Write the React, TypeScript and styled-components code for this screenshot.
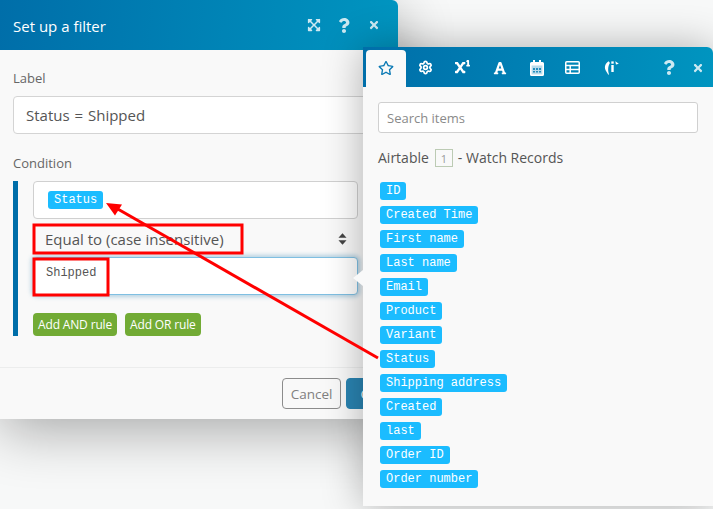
import React from "react";
import styled, { createGlobalStyle } from "styled-components";
import { Settings } from "lucide-react";
import { FaExpandArrowsAlt, FaQuestion, FaTimes, FaRegStar, FaFont, FaSuperscript } from "react-icons/fa";

const Global = createGlobalStyle`
  html, body { margin: 0; padding: 0; }
  body { font-family: "Open Sans", "Noto Sans", sans-serif; color: #555; background: #f6f7f7; }
`;

const Desktop = styled.div`
  position: relative;
  width: 713px;
  height: 509px;
  overflow: hidden;
  background: #f7f8f8;
`;

const Dialog = styled.section`
  position: absolute;
  left: 0;
  top: 0;
  width: 398px;
  height: 419px;
  display: flex;
  flex-direction: column;
  background: #f9f9f9;
  border-top-right-radius: 6px;
  box-shadow: 0 12px 55px rgba(0, 0, 0, 0.32);
`;

const DialogHeader = styled.header`
  height: 50px;
  flex: none;
  display: flex;
  align-items: center;
  padding: 0 13px;
  background: linear-gradient(95deg, #006ea9, #0095c0);
  border-top-right-radius: 6px;
`;

const DialogTitle = styled.h1`
  flex: 1;
  margin: 0;
  font-size: 15px;
  font-weight: 400;
  color: #fff;
  position: relative;
  top: 1px;
`;

const IconSlot = styled.span<{ $w: number }>`
  display: flex;
  justify-content: center;
  align-items: center;
  width: ${(p) => p.$w}px;
  color: rgba(255, 255, 255, 0.8);
`;

const DialogIcons = styled.div`
  display: flex;
  align-items: center;
  margin-right: 4px;
  gap: 16px;
`;

const DialogBody = styled.div`
  flex: 1;
  padding: 19px 13px 0;
`;

const FieldLabel = styled.div`
  font-size: 13px;
  line-height: 18px;
  color: #666;
`;

const TextBox = styled.div`
  box-sizing: border-box;
  height: 38px;
  width: 372px;
  margin: 9px 0 20px;
  padding: 0 12px;
  display: flex;
  align-items: center;
  background: #fff;
  border: 1px solid #d4d4d4;
  border-radius: 4px;
  font-size: 15px;
  word-spacing: 1px;
  color: #555;
`;

const ConditionRow = styled.div`
  display: flex;
  margin-top: 9px;
  height: 155px;
`;

const Bar = styled.div`
  width: 5px;
  background: #006ea9;
  margin-right: 15px;
`;

const ConditionFields = styled.div`
  width: 325px;
  display: flex;
  flex-direction: column;
`;

const TagField = styled.div`
  box-sizing: border-box;
  height: 38px;
  padding: 9px 14px;
  display: flex;
  align-items: flex-start;
  background: #fff;
  border: 1px solid #d0d0d0;
  border-radius: 4px;
`;

const Pill = styled.span`
  display: inline-block;
  height: 18px;
  line-height: 18px;
  padding: 0 6px;
  background: #1bbcff;
  border-radius: 3px;
  color: #fff;
  font-family: "Liberation Mono", "Courier New", monospace;
  font-size: 12px;
  white-space: pre;
`;

const SelectRow = styled.div`
  height: 30px;
  margin-top: 5px;
  padding: 0 12px;
  display: flex;
  align-items: center;
  justify-content: space-between;
  font-size: 15px;
  color: #555;
`;

const Carets = styled.svg`
  width: 9px;
  height: 12px;
  margin-right: -1px;
`;

const FocusField = styled.div`
  box-sizing: border-box;
  height: 38px;
  margin-top: 3px;
  padding: 5px 12px;
  background: #fff;
  border: 1px solid #7fbfe2;
  border-radius: 4px;
  box-shadow: 0 0 4px 2px rgba(80, 150, 190, 0.4);
  font-family: "Liberation Mono", "Courier New", monospace;
  font-size: 12px;
  line-height: 20px;
  color: #555;
`;

const RuleButtons = styled.div`
  display: flex;
  gap: 8px;
  margin-top: 18px;
`;

const RuleButton = styled.button`
  height: 23px;
  padding: 0 5px;
  border: 0;
  border-radius: 4px;
  background: #72ab35;
  color: #fff;
  font-family: inherit;
  font-size: 12px;
  letter-spacing: -0.15px;
`;

const DialogFooter = styled.footer`
  flex: none;
  box-sizing: border-box;
  height: 52px;
  border-top: 1px solid #eceded;
  padding: 10px 0 0 282px;
  display: flex;
  gap: 5px;
`;

const FooterButton = styled.button<{ $primary?: boolean }>`
  box-sizing: border-box;
  height: 31px;
  width: ${(p) => (p.$primary ? "48px" : "59px")};
  border-radius: 4px;
  border: 1px solid ${(p) => (p.$primary ? "#2a84b2" : "#8c8c8c")};
  background: ${(p) => (p.$primary ? "#2a84b2" : "transparent")};
  color: ${(p) => (p.$primary ? "#fff" : "#808080")};
  font-family: inherit;
  font-size: 13.5px;
  padding: 0;
`;

const Panel = styled.aside`
  position: absolute;
  left: 363px;
  top: 47px;
  width: 350px;
  height: 459px;
  display: flex;
  flex-direction: column;
  background: #f9f9f9;
  box-shadow: 0 0 40px rgba(0, 0, 0, 0.3);
  border-top-right-radius: 6px;
  &::before {
    content: "";
    position: absolute;
    left: -10px;
    top: 223px;
    border-style: solid;
    border-width: 8px 10px 8px 0;
    border-color: transparent #f9f9f9 transparent transparent;
  }
`;

const Tabs = styled.nav`
  height: 40px;
  flex: none;
  box-sizing: border-box;
  padding: 3px 1px 0 3px;
  display: flex;
  background: linear-gradient(95deg, #006ea9, #0095c0);
  border-top-right-radius: 6px;
`;

const Tab = styled.span<{ $active?: boolean; $w: number }>`
  width: ${(p) => p.$w}px;
  flex: none;
  display: flex;
  align-items: center;
  justify-content: center;
  padding-bottom: 2px;
  box-sizing: border-box;
  background: ${(p) => (p.$active ? "#f9f9f9" : "transparent")};
  border-radius: 4px 4px 0 0;
  color: ${(p) => (p.$active ? "#0a79b4" : "#fff")};
`;

const TabSpacer = styled.span`
  flex: 1;
`;

const PanelBody = styled.div`
  padding: 15px;
  display: flex;
  flex-direction: column;
`;

const Search = styled.div`
  box-sizing: border-box;
  height: 31px;
  width: 320px;
  padding: 0 8px;
  display: flex;
  align-items: center;
  background: #fff;
  border: 1px solid #d0d0d0;
  border-radius: 3px;
  font-size: 13px;
  color: #8a8a8a;
`;

const ModuleTitle = styled.div`
  margin-top: 14px;
  height: 20px;
  display: flex;
  align-items: center;
  font-size: 14px;
  color: #555;
  white-space: pre;
`;

const Badge = styled.span`
  box-sizing: border-box;
  width: 18px;
  height: 18px;
  margin: 2px 5px 0 6px;
  display: inline-flex;
  align-items: center;
  justify-content: center;
  border: 1px solid #bccbb4;
  font-size: 11px;
  color: #999;
`;

const ItemList = styled.ul`
  list-style: none;
  margin: 15px 0 0;
  padding: 0 0 0 2px;
  display: flex;
  flex-direction: column;
  align-items: flex-start;
  gap: 6px;
`;

const Item = styled.li`
  display: flex;
`;

const Annotations = styled.svg`
  position: absolute;
  left: 0;
  top: 0;
  width: 713px;
  height: 509px;
  pointer-events: none;
`;

const items = ["ID", "Created Time", "First name", "Last name", "Email", "Product", "Variant", "Status", "Shipping address", "Created", "last", "Order ID", "Order number"];

const CalendarIcon = () => (
  <svg width="14" height="16" viewBox="0 0 14 16">
    <path fill="#fff" d="M3 0h2v2h4V0h2v2h1.500A1.500 1.500 0 0 1 14 3.500v11a1.500 1.500 0 0 1-1.500 1.500h-11A1.500 1.500 0 0 1 0 14.500v-11A1.500 1.500 0 0 1 1.500 2H3Z" />
    <rect x="1.600" y="5.500" width="10.800" height="8.900" fill="#b9dcec" />
    <path fill="#0a7fb4" d="M3 8h2v2H3zM6 8h2v2H6zM9 8h2v2H9zM3 11h2v1.500H3zM6 11h2v1.500H6zM9 11h2v1.500H9z" opacity="0.85" />
  </svg>
);

const TableIcon = () => (
  <svg width="15" height="13" viewBox="0 0 15 13" fill="none" stroke="#fff" strokeWidth="1.500">
    <rect x="0.750" y="0.750" width="13.500" height="11.500" rx="1" />
    <path d="M0.750 4.500h13.500M0.750 8.400h13.500M5.200 4.500v7.700" />
  </svg>
);

const FunctionsIcon = () => (
  <svg width="18" height="18" viewBox="0 0 18 18" fill="#fff">
    <path d="M5.800 2.300 C2.400 4 .9 8 2.700 11.500 L5.300 15.800 L6.100 15.300 C5 12.400 4.500 8 6.900 4 Z" />
    <rect x="8.300" y="6" width="2.400" height="7" />
    <rect x="8.300" y="2.400" width="2.400" height="2.300" />
    <path d="M12.300 2.200 L15.800 4.700 L13 5.500 Z" />
  </svg>
);

export default function App() {
  return (
    <Desktop>
      <Global />
      <Dialog>
        <DialogHeader>
          <DialogTitle>Set up a filter</DialogTitle>
          <DialogIcons>
            <IconSlot $w={14}><FaExpandArrowsAlt size={14} /></IconSlot>
            <IconSlot $w={14}><FaQuestion size={15} /></IconSlot>
            <IconSlot $w={14}><FaTimes size={12} /></IconSlot>
          </DialogIcons>
        </DialogHeader>
        <DialogBody>
          <FieldLabel>Label</FieldLabel>
          <TextBox>Status = Shipped</TextBox>
          <FieldLabel>Condition</FieldLabel>
          <ConditionRow>
            <Bar />
            <ConditionFields>
              <TagField><Pill>Status</Pill></TagField>
              <SelectRow>
                <span>Equal to (case insensitive)</span>
                <Carets viewBox="0 0 10 13" fill="#444">
                  <path d="M5 0 L9.500 5 H0.500 Z M5 13 L0.500 8 H9.500 Z" />
                </Carets>
              </SelectRow>
              <FocusField>Shipped</FocusField>
              <RuleButtons>
                <RuleButton>Add AND rule</RuleButton>
                <RuleButton>Add OR rule</RuleButton>
              </RuleButtons>
            </ConditionFields>
          </ConditionRow>
        </DialogBody>
        <DialogFooter>
          <FooterButton>Cancel</FooterButton>
          <FooterButton $primary>OK</FooterButton>
        </DialogFooter>
      </Dialog>
      <Panel>
        <Tabs>
          <Tab $active $w={40}><FaRegStar size={16} /></Tab>
          <Tab $w={38}><Settings size={15} strokeWidth={2.8} /></Tab>
          <Tab $w={37}><FaSuperscript size={15} /></Tab>
          <Tab $w={38}><FaFont size={14} /></Tab>
          <Tab $w={35}><CalendarIcon /></Tab>
          <Tab $w={37}><TableIcon /></Tab>
          <Tab $w={41}><FunctionsIcon /></Tab>
          <TabSpacer />
          <Tab $w={29}><IconSlot $w={14}><FaQuestion size={15} /></IconSlot></Tab>
          <Tab $w={29}><IconSlot $w={14}><FaTimes size={12} /></IconSlot></Tab>
        </Tabs>
        <PanelBody>
          <Search>Search items</Search>
          <ModuleTitle>Airtable<Badge>1</Badge>- Watch Records</ModuleTitle>
          <ItemList>
            {items.map((t) => (
              <Item key={t}><Pill>{t}</Pill></Item>
            ))}
          </ItemList>
        </PanelBody>
      </Panel>
      <Annotations viewBox="0 0 713 509">
        <rect x="34" y="225" width="208" height="28" fill="none" stroke="#f00" strokeWidth="3" />
        <rect x="34" y="259" width="74" height="36" fill="none" stroke="#f00" strokeWidth="3" />
        <line x1="378" y1="358" x2="116" y2="208" stroke="#f00" strokeWidth="3" />
        <path d="M106 203 L122 204.500 L115 215.500 Z" fill="#f00" />
      </Annotations>
    </Desktop>
  );
}
